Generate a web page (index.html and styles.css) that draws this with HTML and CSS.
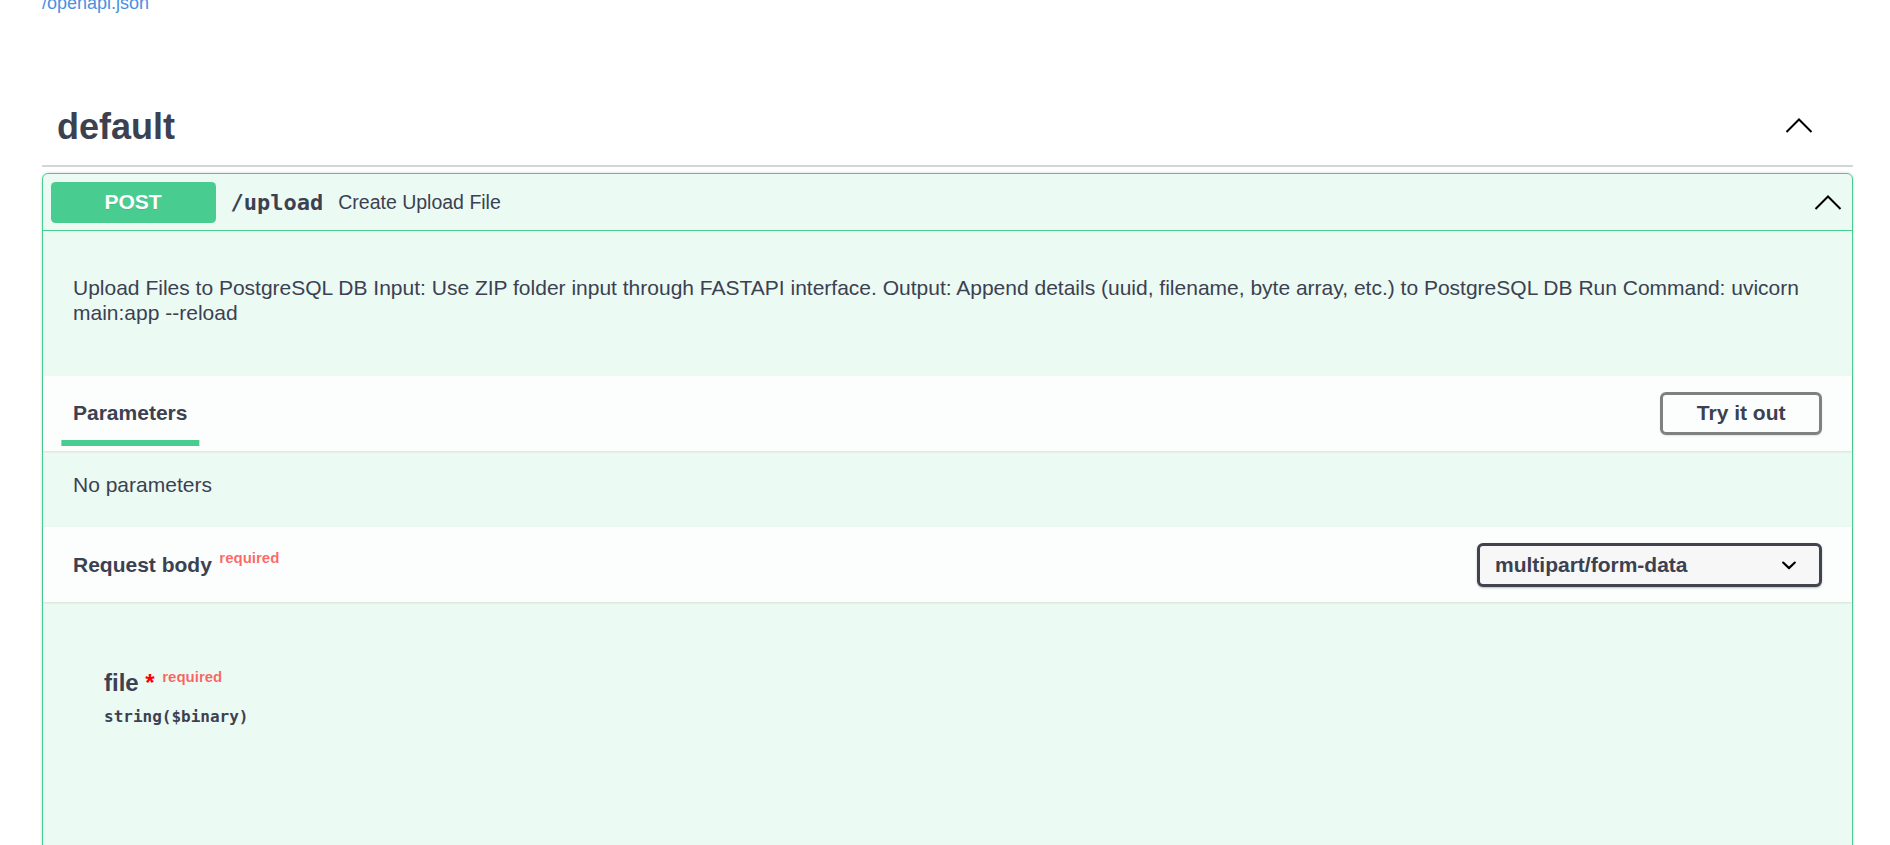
FILE: index.html
```html
<!DOCTYPE html>
<html lang="en">
<head>
<meta charset="utf-8">
<title>FastAPI - Swagger UI</title>
<link rel="stylesheet" href="styles.css">
</head>
<body>
<div class="wrapper">
  <div class="info"><a class="spec-link" href="#">/openapi.json</a></div>
  <section class="tag-section">
    <h3 class="tag">
      <span class="tag-name">default</span>
      <button class="expand" aria-label="Collapse operation">
        <svg width="28" height="16" viewBox="0 0 28 16"><polyline points="1.5,15 14,2.5 26.5,15" fill="none" stroke="#000" stroke-width="2"/></svg>
      </button>
    </h3>
    <div class="opblock">
      <div class="summary">
        <span class="method">POST</span>
        <span class="path">/upload</span>
        <span class="summary-desc">Create Upload File</span>
        <svg class="arrow" width="28" height="16" viewBox="0 0 28 16"><polyline points="1.5,15 14,2.5 26.5,15" fill="none" stroke="#000" stroke-width="2"/></svg>
      </div>
      <div class="op-body">
        <div class="description">
          <p>Upload Files to PostgreSQL DB Input: Use ZIP folder input through FASTAPI interface. Output: Append details (uuid, filename, byte array, etc.) to PostgreSQL DB Run Command: uvicorn main:app --reload</p>
        </div>
        <div class="section-header">
          <h4 class="tab"><span class="tab-label">Parameters</span></h4>
          <button class="btn">Try it out</button>
        </div>
        <div class="no-params">No parameters</div>
        <div class="section-header">
          <h4 class="req-title">Request body<span class="req">required</span></h4>
          <div class="select">
            <span>multipart/form-data</span>
            <svg width="30" height="30" viewBox="0 0 20 20"><path d="M13.418 7.859a.695.695 0 01.978 0 .68.68 0 010 .969l-3.908 3.83a.697.697 0 01-.979 0l-3.908-3.830a.68.68 0 010-.969.695.695 0 01.978 0L10 11l3.418-3.141z" fill="#000"/></svg>
          </div>
        </div>
        <div class="body-params">
          <div class="param-name">file<span class="star">&nbsp;*</span><span class="req">required</span></div>
          <div class="param-type">string($binary)</div>
        </div>
      </div>
    </div>
  </section>
</div>
</body>
</html>
```
FILE: styles.css
```css
html, body {
  margin: 0;
  padding: 0;
  background: #fff;
}
body {
  font-family: "Liberation Sans", Arial, sans-serif;
  color: #3b4151;
}
.wrapper {
  padding: 0 37px 0 42px;
}
.info {
  margin-top: -7px;
  line-height: 21px;
}
.spec-link {
  font-size: 18px;
  color: #4990e2;
  text-decoration: none;
}
.tag-section {
  margin-top: 77px;
}
.tag {
  display: flex;
  align-items: center;
  justify-content: space-between;
  margin: 0 0 6px;
  padding: 15px 40px 17px 15px;
  border-bottom: 2px solid rgba(59, 65, 81, 0.22);
  font-size: 36px;
  font-weight: bold;
  color: #3b4151;
}
.expand {
  display: flex;
  border: 0;
  background: none;
  padding: 0;
  margin-top: -4px;
}
.opblock {
  border: 1px solid #49cc90;
  border-radius: 6px;
  background: rgba(73, 204, 144, 0.1);
  box-shadow: 0 0 3px rgba(0, 0, 0, 0.19);
}
.summary {
  display: flex;
  align-items: center;
  padding: 7.5px;
  border-bottom: 1px solid #49cc90;
}
.method {
  display: flex;
  align-items: center;
  justify-content: center;
  width: 165px;
  height: 41px;
  border-radius: 4.5px;
  background: #49cc90;
  color: #fff;
  font-size: 21px;
  font-weight: bold;
  text-shadow: 0 1px 0 rgba(0, 0, 0, 0.1);
}
.path {
  padding: 0 15px;
  font-family: "DejaVu Sans Mono", "Liberation Mono", monospace;
  font-weight: bold;
  font-size: 22px;
  color: #3b4151;
}
.summary-desc {
  flex: 1;
  font-size: 19.5px;
  color: #3b4151;
}
.arrow {
  margin-right: 2.5px;
}
.description {
  padding: 22.5px 30px;
  margin-bottom: 7.5px;
}
.description p {
  margin: 21px 0;
  font-size: 21px;
  line-height: 25px;
}
.section-header {
  display: flex;
  align-items: center;
  justify-content: space-between;
  box-sizing: border-box;
  min-height: 75px;
  padding: 12px 30px;
  background: rgba(255, 255, 255, 0.8);
  box-shadow: 0 1px 2px rgba(0, 0, 0, 0.1);
}
.tab, .req-title {
  margin: 0;
  font-size: 21px;
  font-weight: bold;
  color: #3b4151;
}
.tab-label {
  position: relative;
}
.tab-label::after {
  content: "";
  position: absolute;
  left: 50%;
  bottom: -22px;
  width: 120%;
  height: 6px;
  transform: translateX(-50%);
  background: #49cc90;
}
.btn {
  font-family: "Liberation Sans", Arial, sans-serif;
  font-size: 21px;
  font-weight: bold;
  line-height: 22px;
  color: #3b4151;
  padding: 7.5px 33.5px;
  border: 3px solid #808080;
  border-radius: 6px;
  background: transparent;
  box-shadow: 0 1px 2px rgba(0, 0, 0, 0.1);
}
.no-params {
  padding: 22.5px 30px 30px;
  font-size: 21px;
}
.req {
  position: relative;
  top: -9px;
  padding: 0 7.5px;
  font-size: 15px;
  font-weight: bold;
  color: rgba(255, 0, 0, 0.6);
}
.select {
  display: flex;
  align-items: center;
  justify-content: space-between;
  box-sizing: border-box;
  width: 345px;
  height: 44px;
  padding: 0 15px;
  border: 3px solid #41444e;
  border-radius: 6px;
  background: #f7f7f7;
  box-shadow: 0 1px 2px rgba(0, 0, 0, 0.25);
  font-size: 21px;
  font-weight: bold;
  color: #3b4151;
}
.body-params {
  padding: 67px 0 400px 61px;
}
.param-name {
  font-size: 24px;
  font-weight: bold;
  color: #3b4151;
}
.star {
  color: red;
}
.param-type {
  padding-top: 10px;
  font-family: "DejaVu Sans Mono", "Liberation Mono", monospace;
  font-weight: bold;
  font-size: 16px;
  color: #3b4151;
}
```
